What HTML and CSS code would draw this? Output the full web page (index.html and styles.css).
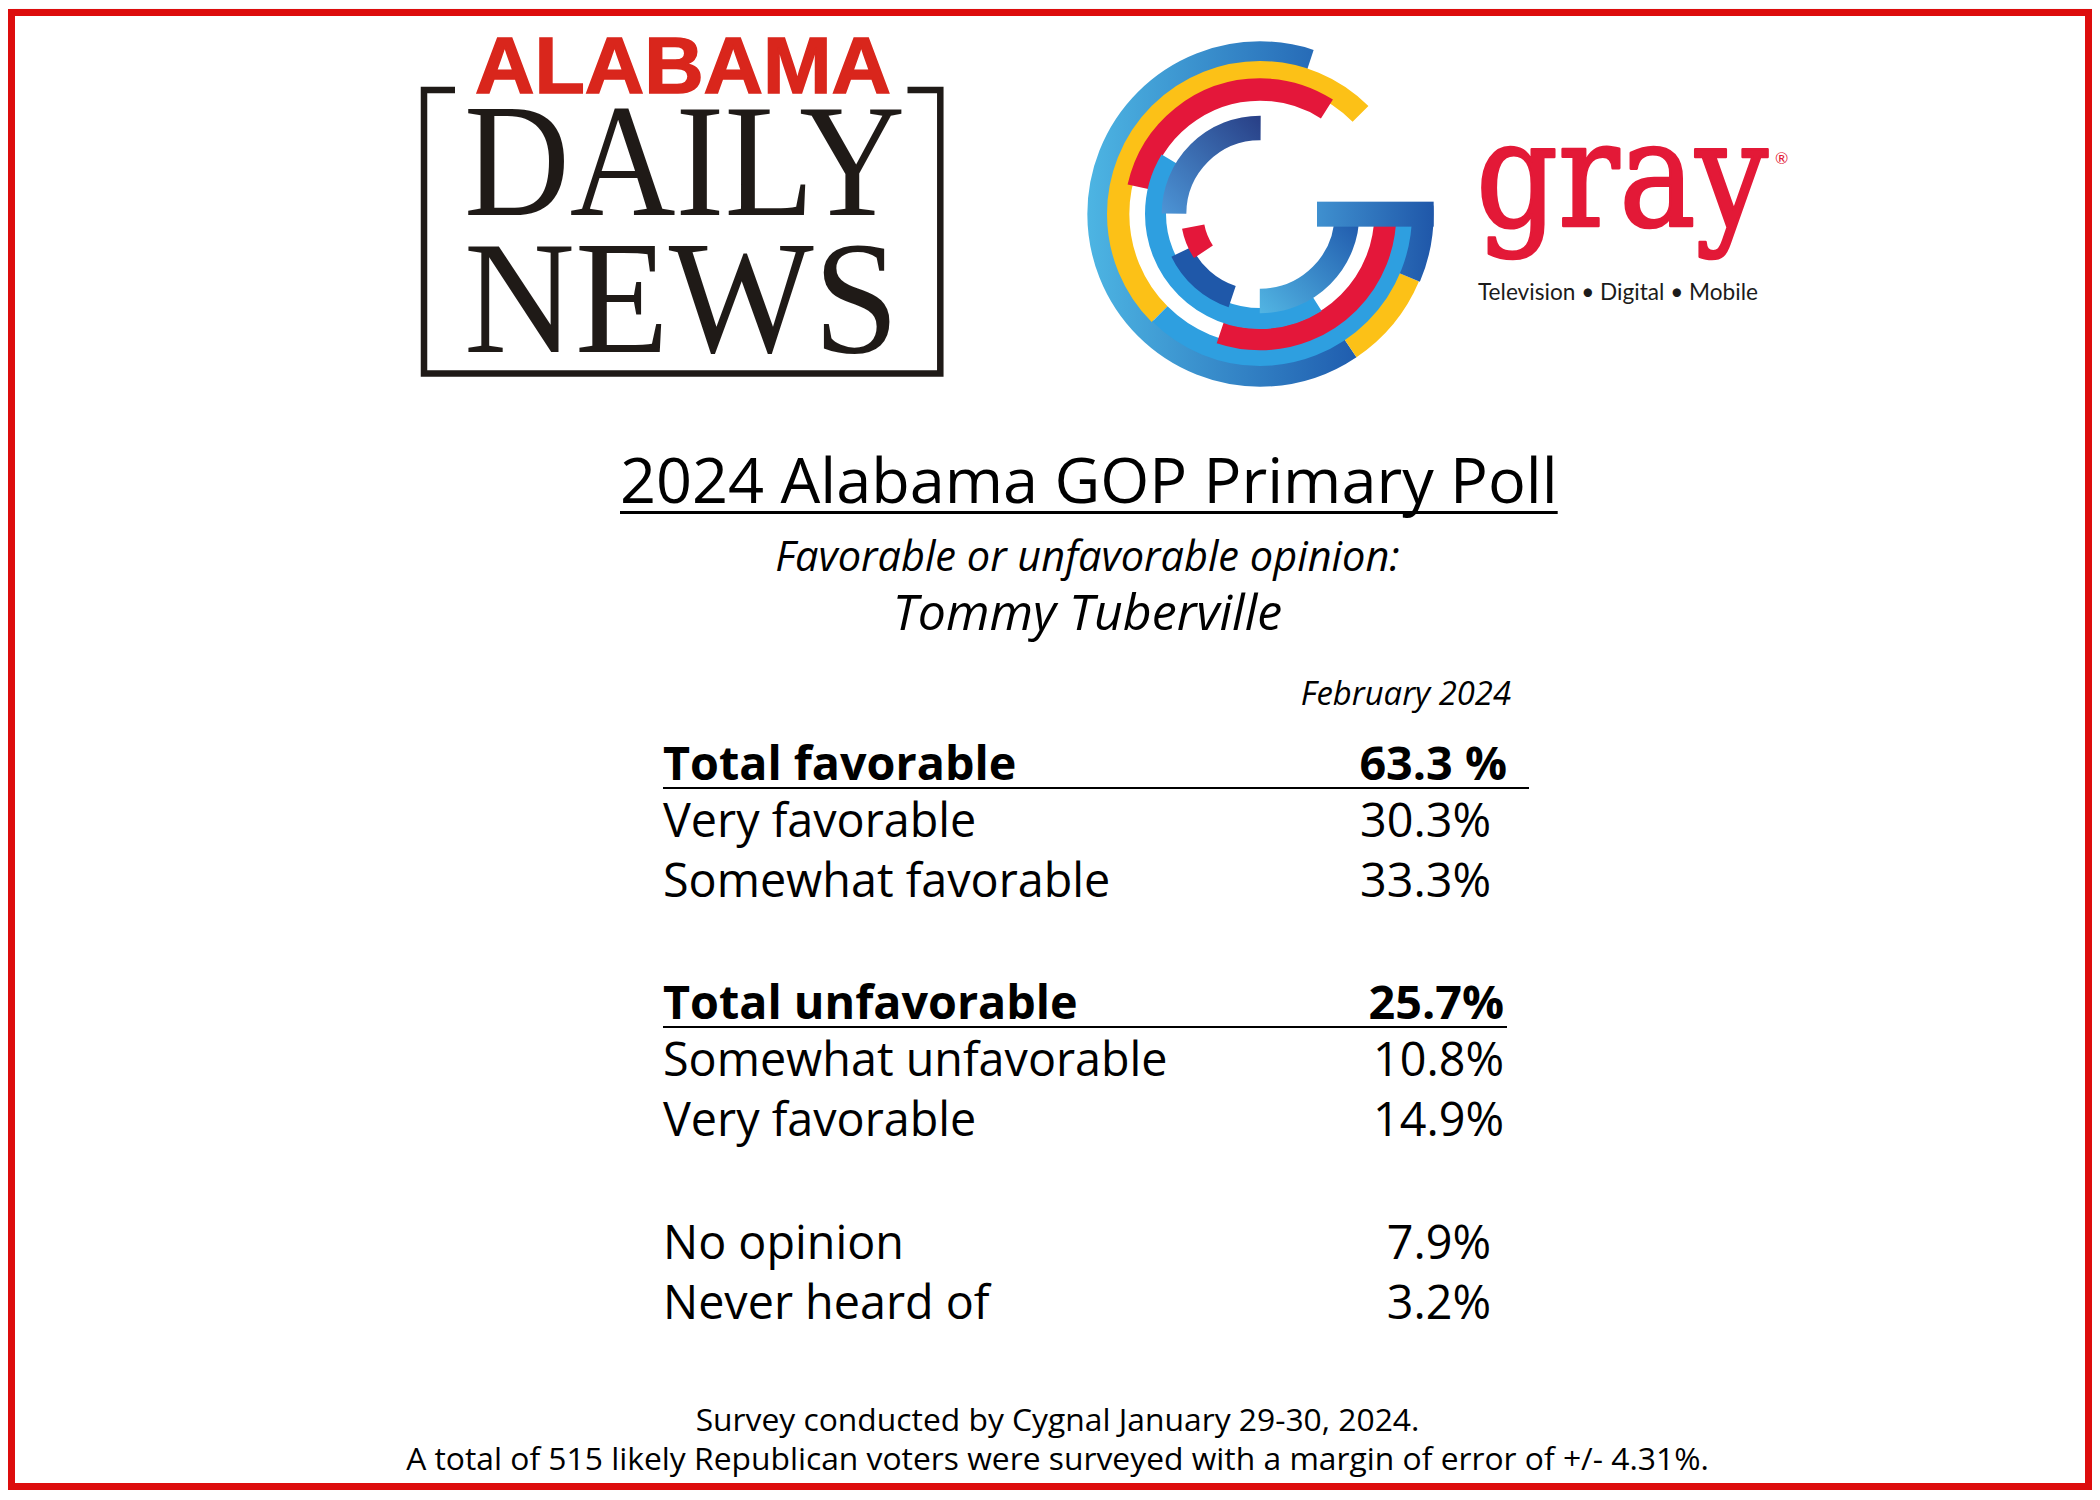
FILE: index.html
```html
<!DOCTYPE html>
<html lang="en">
<head>
<meta charset="utf-8">
<title>2024 Alabama GOP Primary Poll</title>
<link rel="stylesheet" href="styles.css">
</head>
<body>
<div class="frame">
  <header class="logos">
    <svg class="adn" width="526" height="392" viewBox="0 0 526 392" aria-label="Alabama Daily News">
      <text class="adn-state" x="55" y="76.7" textLength="416" lengthAdjust="spacingAndGlyphs">ALABAMA</text>
      <path d="M35 74H4V357.4H520.3V74H487.5" fill="none" stroke="#1f1a17" stroke-width="6.5"/>
      <text class="adn-word" x="44" y="199" textLength="441" lengthAdjust="spacingAndGlyphs">DAILY</text>
      <text class="adn-word" x="44" y="336" textLength="435" lengthAdjust="spacingAndGlyphs">NEWS</text>
    </svg>

    <svg class="gray-mark" width="360" height="360" viewBox="-540 -540 1080 1080" aria-hidden="true">
      <defs>
        <linearGradient id="gA" gradientUnits="userSpaceOnUse" x1="-520" y1="0" x2="300" y2="0">
          <stop offset="0" stop-color="#4db5e3"/>
          <stop offset="1" stop-color="#1f5cae"/>
        </linearGradient>
        <linearGradient id="gBar" gradientUnits="userSpaceOnUse" x1="171" y1="0" x2="521" y2="0">
          <stop offset="0" stop-color="#3f90cf"/>
          <stop offset="1" stop-color="#1f57a9"/>
        </linearGradient>
        <linearGradient id="gIn1" gradientUnits="userSpaceOnUse" x1="-295" y1="0" x2="0" y2="-295">
          <stop offset="0" stop-color="#4c95d6"/>
          <stop offset="1" stop-color="#283f86"/>
        </linearGradient>
        <linearGradient id="gIn2" gradientUnits="userSpaceOnUse" x1="0" y1="298" x2="298" y2="0">
          <stop offset="0" stop-color="#52b5e3"/>
          <stop offset="1" stop-color="#1e56aa"/>
        </linearGradient>
      </defs>
      <g fill="none">
        <circle r="485" stroke="url(#gA)" stroke-width="66" stroke-dasharray="1963.84 1083.51" stroke-dashoffset="2573.32"/>
        <circle r="425.5" stroke="#fcc117" stroke-width="67" stroke-dasharray="1336.75 1336.75" stroke-dashoffset="1670.94"/>
        <circle r="485" stroke="#fcc117" stroke-width="66" stroke-dasharray="279.34 2768.01" stroke-dashoffset="2852.66"/>
        <circle r="483" stroke="url(#gBar)" stroke-width="76" stroke-dasharray="219.18 2815.6" stroke-dashoffset="25.29"/>
        <circle r="424" stroke="#2e9fe0" stroke-width="64" stroke-dasharray="999.03 1665.05"/>
        <circle r="373.5" stroke="#e4173a" stroke-width="67" stroke-dasharray="716.42 1630.35" stroke-dashoffset="1091.9"/>
        <circle r="376" stroke="#e4173a" stroke-width="66" stroke-dasharray="712.02 1650.46"/>
        <circle r="313.5" stroke="#2e9fe0" stroke-width="63" stroke-dasharray="839.89 1129.89" stroke-dashoffset="1655.16"/>
        <circle r="258" stroke="url(#gIn1)" stroke-width="74" stroke-dasharray="405.27 1215.79" stroke-dashoffset="810.53"/>
        <circle r="261" stroke="url(#gIn2)" stroke-width="74" stroke-dasharray="409.98 1229.93"/>
        <circle r="261.5" stroke="#1f58a9" stroke-width="67" stroke-dasharray="207.66 1435.39" stroke-dashoffset="1147.85"/>
        <circle r="204" stroke="#e4173a" stroke-width="68" stroke-dasharray="81.89 1199.88" stroke-dashoffset="761.94"/>
      </g>
      <rect x="171" y="-37" width="350" height="75" fill="url(#gBar)"/>
    </svg>

    <svg class="gray-word" width="330" height="240" viewBox="0 0 330 240" aria-label="gray Television Digital Mobile">
      <text class="gray-name" x="6" y="146" textLength="292" lengthAdjust="spacingAndGlyphs">gray</text>
      <text class="gray-reg" x="305" y="84">®</text>
      <text class="gray-tag" x="8" y="220" textLength="280" lengthAdjust="spacingAndGlyphs">Television • Digital • Mobile</text>
    </svg>
  </header>

  <section class="heading">
    <h1 class="title">2024 Alabama GOP Primary Poll</h1>
    <p class="subtitle">Favorable or unfavorable opinion:</p>
    <p class="name">Tommy Tuberville</p>
  </section>

  <section class="results">
    <div class="date">February 2024</div>

    <div class="row total total-fav"><span>Total favorable</span><span>63.3 %</span></div>
    <div class="row inset-wide"><span>Very favorable</span><span>30.3%</span></div>
    <div class="row inset-wide"><span>Somewhat favorable</span><span>33.3%</span></div>

    <div class="row total total-unfav"><span>Total unfavorable</span><span>25.7%</span></div>
    <div class="row inset-mid"><span>Somewhat unfavorable</span><span>10.8%</span></div>
    <div class="row inset-mid"><span>Very favorable</span><span>14.9%</span></div>

    <div class="row inset-wide group-gap"><span>No opinion</span><span>7.9%</span></div>
    <div class="row inset-wide"><span>Never heard of</span><span>3.2%</span></div>
  </section>

  <footer class="note">
    <p>Survey conducted by Cygnal January 29-30, 2024.</p>
    <p>A total of 515 likely Republican voters were surveyed with a margin of error of +/- 4.31%.</p>
  </footer>
</div>
</body>
</html>
```

FILE: styles.css
```css
html, body {
  background: #ffffff;
}

body {
  margin: 8px;
  font-family: "Open Sans", "Liberation Sans", sans-serif;
  color: #000000;
}

.frame {
  margin-top: 1px;
  height: 1481px;
  box-sizing: border-box;
  border: 7px solid #dd0d0d;
  box-shadow: 3px 4px 6px rgba(0, 0, 0, 0.35);
  display: flex;
  flex-direction: column;
}

/* ---------- logos ---------- */
.logos {
  flex: none;
  height: 420px;
  padding-left: 405px;
  display: flex;
  align-items: flex-start;
}

.adn {
  flex: none;
  margin-top: 0;
}

.adn-state {
  font-family: "Liberation Sans", Arial, sans-serif;
  font-weight: 700;
  font-size: 79px;
  fill: #d9261c;
  stroke: #d9261c;
  stroke-width: 1.5px;
}

.adn-word {
  font-family: "Liberation Serif", "Times New Roman", serif;
  font-size: 160px;
  fill: #1f1a17;
}

.gray-mark {
  flex: none;
  margin-left: 134px;
  margin-top: 18px;
}

.gray-word {
  flex: none;
  margin-left: 30px;
  margin-top: 64px;
}

.gray-name {
  font-family: "DejaVu Serif Condensed", "DejaVu Serif", "Liberation Serif", serif;
  font-size: 148px;
  fill: #e31937;
  stroke: #e31937;
  stroke-width: 2.6px;
  stroke-linejoin: round;
}

.gray-reg {
  font-family: Lato, "Liberation Sans", sans-serif;
  font-size: 16px;
  fill: #e31937;
}

.gray-tag {
  font-family: Lato, "Liberation Sans", sans-serif;
  font-size: 24px;
  fill: #1b1b1b;
}

/* ---------- heading ---------- */
.heading {
  flex: none;
  margin-left: 605px;
  width: 935px;
  text-align: center;
}

.title {
  margin: 0;
  font-size: 63px;
  font-weight: 400;
  line-height: 86px;
  white-space: nowrap;
  text-decoration: underline;
  text-decoration-thickness: 3px;
  text-underline-offset: 8px;
  text-decoration-skip-ink: none;
}

.subtitle {
  margin: 5px 0 0;
  font-size: 41.5px;
  font-style: italic;
  line-height: 56px;
  white-space: nowrap;
}

.name {
  margin: 2px 0 0;
  font-size: 50px;
  font-style: italic;
  line-height: 52px;
  white-space: nowrap;
}

/* ---------- results ---------- */
.results {
  flex: none;
  margin-left: 648px;
  width: 866px;
  margin-top: 34px;
}

.date {
  text-align: right;
  padding-right: 18px;
  font-size: 32.8px;
  font-style: italic;
  line-height: 44px;
}

.row {
  display: flex;
  justify-content: space-between;
  font-size: 46.7px;
  line-height: 60px;
  white-space: nowrap;
}

.row.total {
  font-weight: 700;
  line-height: 50px;
  border-bottom: 2.5px solid #000000;
}

.total-fav {
  margin-top: 22px;
  padding-right: 22px;
}

.total-unfav {
  margin-top: 67px;
  margin-right: 22px;
  padding-right: 3px;
}

.inset-wide {
  padding-right: 38px;
}

.inset-mid {
  padding-right: 25px;
}

.group-gap {
  margin-top: 63px;
}

/* ---------- footnote ---------- */
.note {
  flex: none;
  margin-top: 69px;
  padding-left: 15px;
  text-align: center;
  font-size: 31.8px;
  line-height: 38.7px;
}

.note p {
  margin: 0;
  white-space: nowrap;
}
```
